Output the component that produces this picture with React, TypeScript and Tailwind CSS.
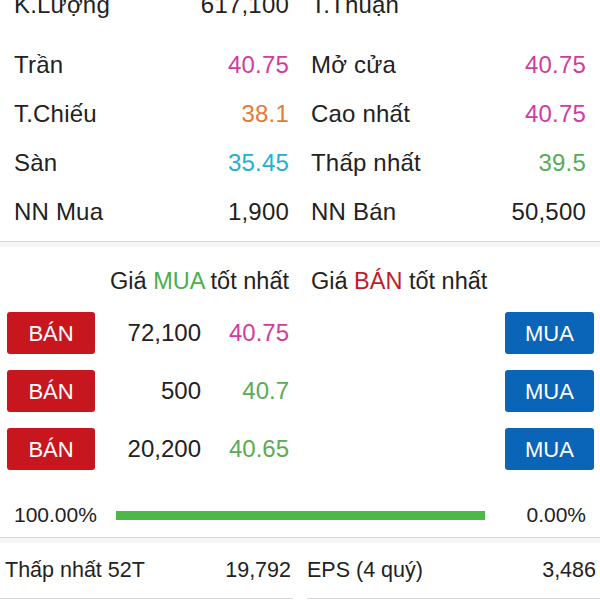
const stats: [string, string, string, string, string, string][] = [
  ['Trần', '40.75', 'text-[#d23c9f]', 'Mở cửa', '40.75', 'text-[#d23c9f]'],
  ['T.Chiếu', '38.1', 'text-[#e07b38]', 'Cao nhất', '40.75', 'text-[#d23c9f]'],
  ['Sàn', '35.45', 'text-[#23b0d2]', 'Thấp nhất', '39.5', 'text-[#5aab55]'],
  ['NN Mua', '1,900', 'text-[#222]', 'NN Bán', '50,500', 'text-[#222]'],
]

const bids = [
  { qty: '72,100', price: '40.75', color: 'text-[#d23c9f]' },
  { qty: '500', price: '40.7', color: 'text-[#5aab55]' },
  { qty: '20,200', price: '40.65', color: 'text-[#5aab55]' },
]

function Cell({ label, value, color }: { label: string; value: string; color: string }) {
  return (
    <div className="flex h-[49px] items-center justify-between">
      <span>{label}</span>
      <span className={color}>{value}</span>
    </div>
  )
}

function Separator() {
  return (
    <div>
      <div className="h-px bg-[#d6d6d6]" />
      <div className="h-[5px] bg-[#f5f5f5]" />
    </div>
  )
}

export default function App() {
  return (
    <div className="h-[600px] w-[600px] overflow-hidden bg-white font-['Liberation_Sans',Arial,sans-serif] text-[#222]">
      <div className="-mt-[20px] px-[14px] pb-[5px] text-[24px] tracking-[0.2px]">
        <div className="grid grid-cols-2 gap-x-[22px]">
          <Cell label="K.Lượng" value="617,100" color="text-[#222]" />
          <Cell label="T.Thuận" value="" color="text-[#222]" />
        </div>
        <div className="mt-[11px] grid grid-cols-2 gap-x-[22px]">
          {stats.map(([l1, v1, c1, l2, v2, c2]) => (
            <div key={l1} className="contents">
              <Cell label={l1} value={v1} color={c1} />
              <Cell label={l2} value={v2} color={c2} />
            </div>
          ))}
        </div>
      </div>

      <Separator />

      <div className="pt-[17px]">
        <div className="grid h-[28px] grid-cols-2 items-center gap-x-[22px] px-[14px] text-[23.5px]">
          <div className="text-right">
            Giá <span className="text-[#4cae4c]">MUA</span> tốt nhất
          </div>
          <div>
            Giá <span className="text-[#c21b28]">BÁN</span> tốt nhất
          </div>
        </div>

        <div className="mt-[20px] flex flex-col gap-[16px]">
          {bids.map(b => (
            <div key={b.qty} className="flex h-[42px] items-center pl-[7px] pr-[6px] text-[24px]">
              <button className="flex h-[42px] w-[88px] items-center justify-center rounded-[3px] bg-[#c8161e] text-[22px] text-white">
                BÁN
              </button>
              <span className="w-[106px] text-right">{b.qty}</span>
              <span className={`w-[88px] text-right ${b.color}`}>{b.price}</span>
              <div className="flex-1" />
              <button className="flex h-[42px] w-[89px] items-center justify-center rounded-[3px] bg-[#0a64b8] text-[22px] text-white">
                MUA
              </button>
            </div>
          ))}
        </div>

        <div className="mt-[30px] flex h-[30px] items-center px-[14px] text-[21px]">
          <span className="w-[102px]">100.00%</span>
          <div className="h-[9px] flex-1 bg-[#4cb848]" />
          <span className="w-[101px] text-right">0.00%</span>
        </div>
      </div>

      <div className="mt-[7px]">
        <Separator />
      </div>

      <div className="grid grid-cols-2 gap-x-[14px] text-[21.5px]">
        <div className="flex h-[56px] items-center justify-between border-b border-[#d6d6d6] pl-[5px] pr-[2px]">
          <span>Thấp nhất 52T</span>
          <span>19,792</span>
        </div>
        <div className="flex h-[56px] items-center justify-between border-b border-[#d6d6d6] pr-[4px]">
          <span>EPS (4 quý)</span>
          <span>3,486</span>
        </div>
      </div>
    </div>
  )
}
